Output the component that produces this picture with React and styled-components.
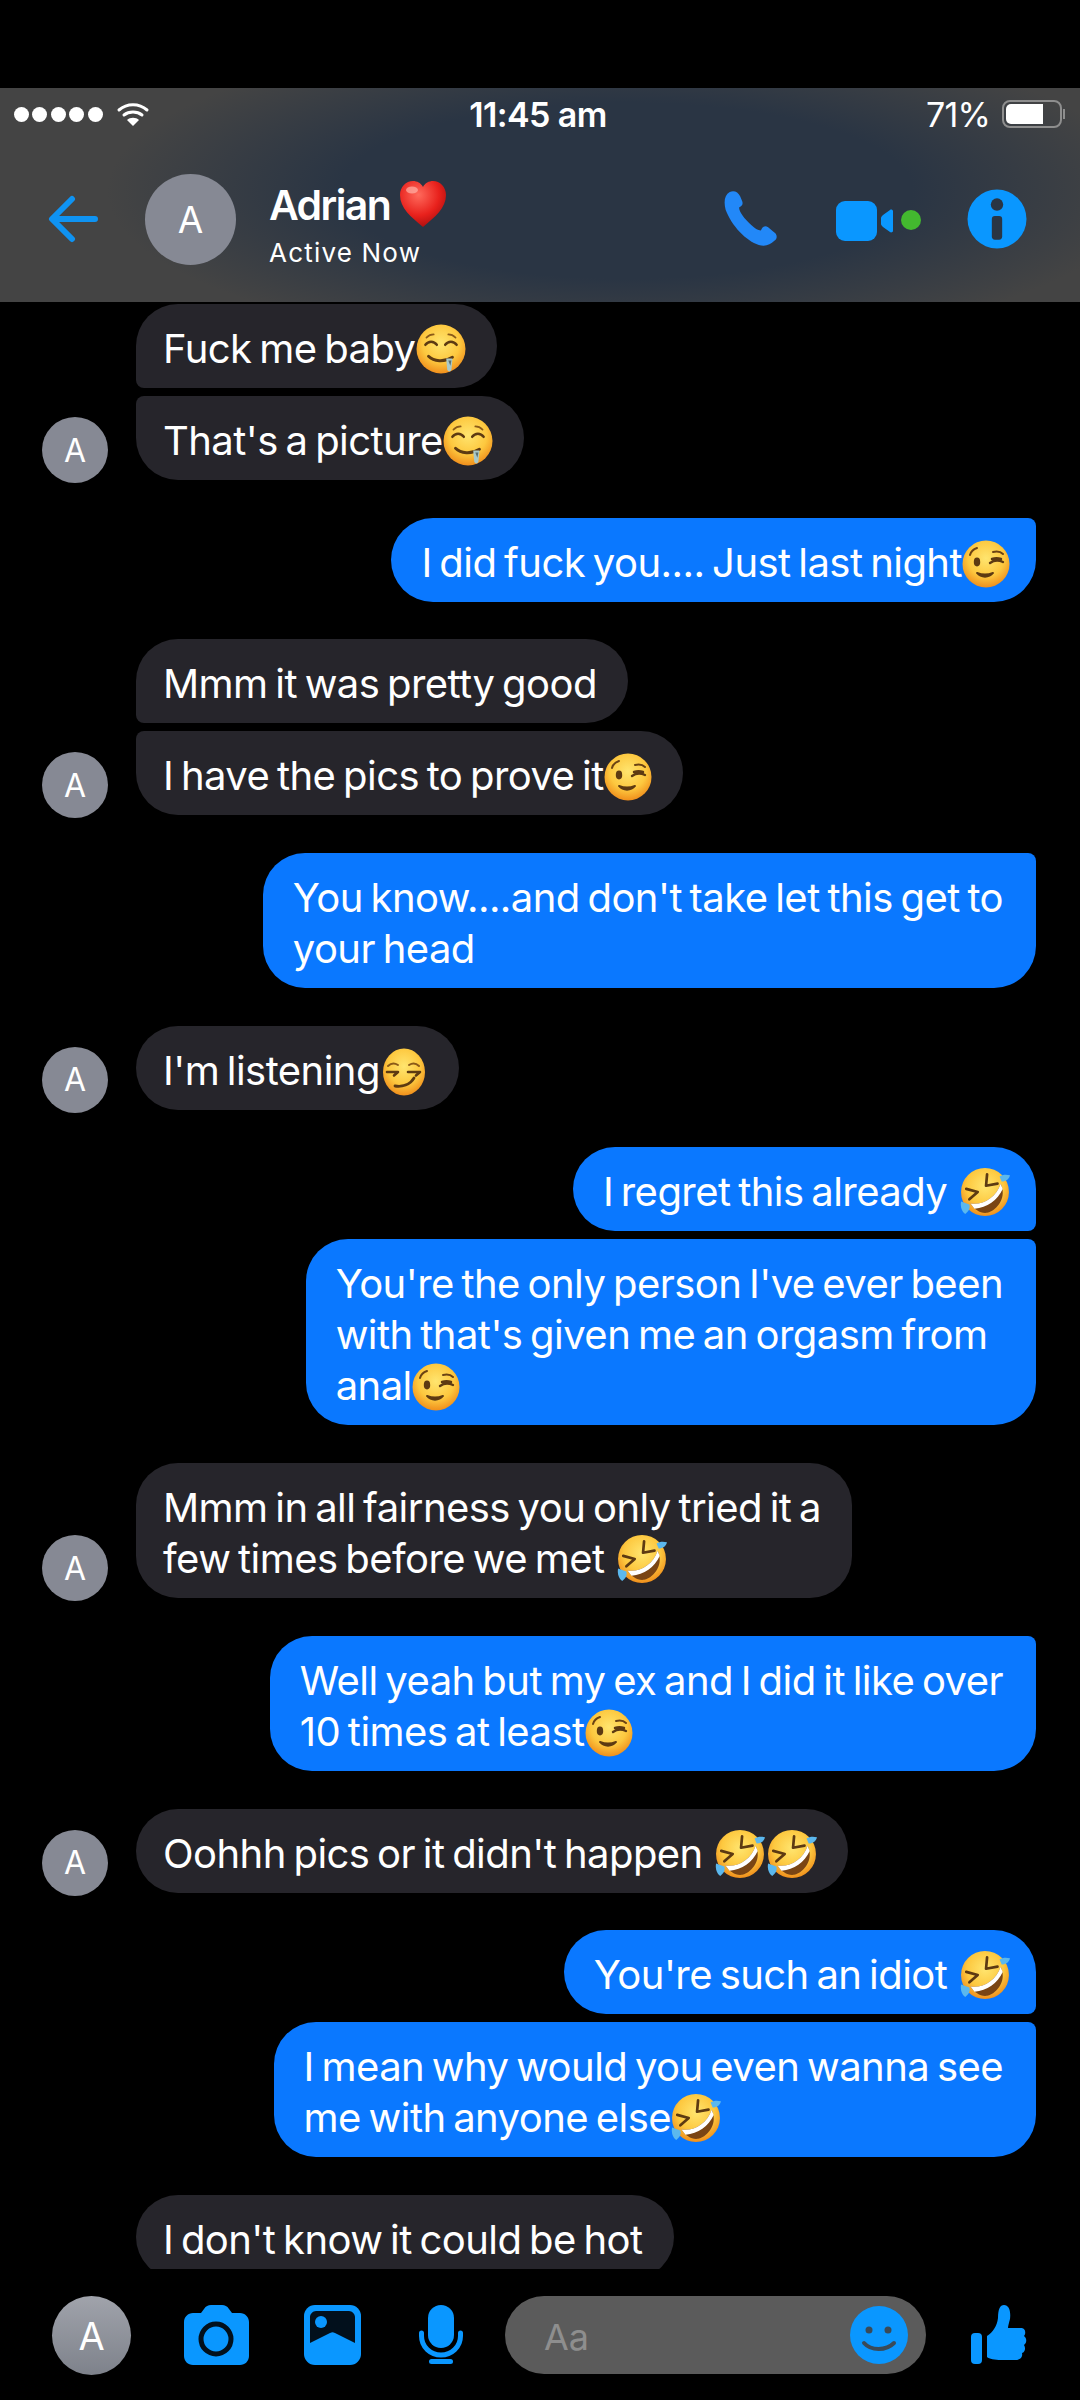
import React from 'react';
import styled, { createGlobalStyle } from 'styled-components';

const GlobalStyle = createGlobalStyle`
  html, body {
    margin: 0;
    padding: 0;
    background: #000;
  }
  * {
    box-sizing: border-box;
  }
`;

const BLUE = '#0a97ff';

const FaceDefs = ({ id }) => (
  <defs>
    <radialGradient id={id} cx="50%" cy="38%" r="62%">
      <stop offset="0%" stopColor="#ffe56f" />
      <stop offset="62%" stopColor="#fdc83f" />
      <stop offset="100%" stopColor="#f08f1c" />
    </radialGradient>
  </defs>
);

const EmojiSvg = styled.svg`
  width: ${(p) => p.$size || 48}px;
  height: ${(p) => p.$size || 48}px;
  margin-left: ${(p) => p.$nudge || 0}px;
  vertical-align: ${(p) => p.$drop || -11}px;
  display: inline-block;
`;

const Drool = () => (
  <EmojiSvg $size={50} viewBox="0 0 48 48">
    <FaceDefs id="droolFace" />
    <circle cx="24" cy="24" r="23.5" fill="url(#droolFace)" />
    <path d="M9 20c3-4 8-4 11 0M28 20c3-4 8-4 11 0" fill="none" stroke="#5d3a12" strokeWidth="2.4" strokeLinecap="round" />
    <path d="M10 13c2-2 5-3 7-3M31 10c2 0 5 1 7 3" fill="none" stroke="#8b5a18" strokeWidth="1.6" strokeLinecap="round" />
    <path d="M12 31c5 5 15 6 23 1" fill="none" stroke="#5d3a12" strokeWidth="2.8" strokeLinecap="round" />
    <path d="M29 33h6l-1 11c-1 2-3 2-4 0z" fill="#a9c9c9" />
    <path d="M31 35h3l-1 5z" fill="#5d6f70" />
  </EmojiSvg>
);

const Wink = () => (
  <EmojiSvg viewBox="0 0 48 48">
    <FaceDefs id="winkFace" />
    <circle cx="24" cy="24" r="23.5" fill="url(#winkFace)" />
    <path d="M8 15c1-4 4-6 7-7M31 12c4-1 8 0 10 2" fill="none" stroke="#6b4314" strokeWidth="2" strokeLinecap="round" />
    <ellipse cx="15" cy="22" rx="3.2" ry="4.4" fill="#5d3a12" />
    <path d="M28 23c4-3 9-3 13-1M30 19c3-1 6-1 9 0" fill="none" stroke="#5d3a12" strokeWidth="2.4" strokeLinecap="round" />
    <path d="M15 33c4 5 12 5 16 0c-5 2-11 2-16 0z" fill="#5d3a12" stroke="#5d3a12" strokeWidth="2" strokeLinejoin="round" />
  </EmojiSvg>
);

const Smirk = () => (
  <EmojiSvg viewBox="0 0 48 48">
    <FaceDefs id="smirkFace" />
    <ellipse cx="24" cy="24" rx="21" ry="23.5" fill="url(#smirkFace)" />
    <path d="M8 18c3-3 7-3 10-1M29 17c3-2 7-2 10 1" fill="none" stroke="#8b5a18" strokeWidth="2" strokeLinecap="round" />
    <path d="M7 24h11l-4 3.5M28 24h12l-4 3.5" fill="none" stroke="#5d3a12" strokeWidth="2.6" strokeLinecap="round" strokeLinejoin="round" />
    <path d="M15 38c7 1 15-1 19-8" fill="none" stroke="#5d3a12" strokeWidth="2.8" strokeLinecap="round" />
  </EmojiSvg>
);

const Rofl = ({ nudge }) => (
  <EmojiSvg $size={50} $nudge={nudge} viewBox="0 0 48 48">
    <FaceDefs id="roflFace" />
    <circle cx="24" cy="24" r="23" fill="url(#roflFace)" />
    <path d="M6 21l11 3l-8 7M26 7l-1 11l11-2" fill="none" stroke="#5d3a12" strokeWidth="2.6" strokeLinecap="round" strokeLinejoin="round" />
    <path d="M10 35c12 2 25-6 29-19c6 12-2 25-13 28c-6 1-12-3-16-9z" fill="#7a4514" />
    <path d="M10 35c12 2 25-6 29-19l2 5c-5 11-15 18-27 19z" fill="#fff" />
    <path d="M38 9c3-2 7-2 10-1c-1 4-4 6-8 6z" fill="#5bb8ee" />
    <path d="M1 33c-1 5 1 10 4 12c3-2 5-5 4-9z" fill="#5bb8ee" />
  </EmojiSvg>
);

const Heart = () => (
  <EmojiSvg $drop={-8} viewBox="0 0 48 48">
    <defs>
      <radialGradient id="heartFill" cx="40%" cy="30%" r="75%">
        <stop offset="0%" stopColor="#ff6a5c" />
        <stop offset="60%" stopColor="#e8211c" />
        <stop offset="100%" stopColor="#a80d0d" />
      </radialGradient>
    </defs>
    <path d="M24 47C12 37 1 28 1 15C1 7 7 1 14 1c4 0 8 2 10 6c2-4 6-6 10-6c7 0 13 6 13 14c0 13-11 22-23 32z" fill="url(#heartFill)" />
    <ellipse cx="13" cy="10" rx="6" ry="3.5" fill="#ffb3a8" opacity=".7" />
  </EmojiSvg>
);

const Page = styled.div`
  width: 1080px;
  height: 100vh;
  display: flex;
  flex-direction: column;
  background: #000;
  color: #fff;
  font-family: Inter, "Liberation Sans", sans-serif;
  overflow: hidden;
`;

const TopGap = styled.div`
  height: 88px;
  flex: none;
`;

const Header = styled.header`
  flex: none;
  height: 214px;
  display: flex;
  flex-direction: column;
  background:
    radial-gradient(ellipse 520px 160px at 58% 48%, #2a3544 55%, rgba(42, 53, 68, 0) 100%),
    #444444;
`;

const StatusBar = styled.div`
  height: 52px;
  padding: 0 18px 0 14px;
  display: grid;
  grid-template-columns: 1fr auto 1fr;
  align-items: center;
`;

const StatusLeft = styled.div`
  display: flex;
  align-items: center;
  gap: 13px;
`;

const Dots = styled.div`
  display: flex;
  gap: 3.4px;
`;

const Dot = styled.span`
  width: 15px;
  height: 15px;
  border-radius: 50%;
  background: #fff;
`;

const Clock = styled.div`
  font-size: 34px;
  font-weight: 600;
  letter-spacing: -0.6px;
`;

const StatusRight = styled.div`
  display: flex;
  align-items: center;
  justify-content: flex-end;
  gap: 12px;
  font-size: 34px;
  letter-spacing: -0.8px;
`;

const Battery = styled.div`
  position: relative;
  width: 60px;
  height: 28px;
  border: 2px solid #8e8e8e;
  border-radius: 8px;
  padding: 2px;
  &::after {
    content: '';
    position: absolute;
    right: -5px;
    top: 7px;
    width: 2px;
    height: 10px;
    background: #8e8e8e;
  }
`;

const BatteryFill = styled.div`
  height: 100%;
  background: #fff;
  border-radius: 5px 0 0 5px;
`;

const NavBar = styled.div`
  flex: 1;
  display: flex;
  align-items: center;
  padding: 0 0 4px 48px;
`;

const BackIcon = styled.svg`
  width: 52px;
  height: 50px;
  flex: none;
`;

const HeaderAvatar = styled.div`
  width: 91px;
  height: 91px;
  margin-left: 45px;
  flex: none;
  border-radius: 50%;
  background: #868994;
  display: flex;
  align-items: center;
  justify-content: center;
  font-size: 37px;
`;

const Contact = styled.div`
  margin-left: 33px;
  padding-top: 12px;
  flex: 1;
`;

const Name = styled.div`
  font-size: 41px;
  font-weight: 600;
  letter-spacing: -1.6px;
  line-height: 50px;
  white-space: nowrap;
`;

const Presence = styled.div`
  font-size: 26px;
  letter-spacing: 1.2px;
  line-height: 34px;
  margin-top: 6.5px;
`;

const NavActions = styled.div`
  display: flex;
  align-items: center;
  margin-right: 65px;
`;

const PhoneIcon = styled.svg`
  width: 55px;
  height: 56px;
`;

const VideoIcon = styled.svg`
  width: 88px;
  height: 40px;
  margin-left: 58px;
  margin-top: 4px;
`;

const InfoIcon = styled.svg`
  width: 60px;
  height: 60px;
  margin-left: 43px;
  margin-right: -12px;
`;

const Messages = styled.main`
  flex: 1;
  min-height: 0;
  overflow: hidden;
  padding: 2px 44px 0 42px;
  display: flex;
  flex-direction: column;
  gap: 37.7px;
`;

const InGroup = styled.section`
  display: flex;
  align-items: flex-end;
  gap: 28px;
  flex: none;
`;

const OutGroup = styled.section`
  display: flex;
  flex-direction: column;
  align-items: flex-end;
  gap: 8px;
  flex: none;
`;

const BubbleStack = styled.div`
  display: flex;
  flex-direction: column;
  align-items: flex-start;
  gap: 8px;
`;

const Avatar = styled.div`
  width: 66px;
  height: 66px;
  margin-bottom: -3px;
  flex: none;
  border-radius: 50%;
  background: #868994;
  display: flex;
  align-items: center;
  justify-content: center;
  font-size: 32px;
  visibility: ${(p) => (p.$hidden ? 'hidden' : 'visible')};
`;

const SMALL = 8;
const BIG = 42;

const Bubble = styled.div`
  padding: 19px ${(p) => (p.$out ? 33 : 31)}px 14px ${(p) => (p.$out ? 30 : 27)}px;
  font-size: 40px;
  line-height: 51px;
  letter-spacing: -0.55px;
  word-spacing: -3px;
  white-space: nowrap;
  color: #fff;
  background: ${(p) => (p.$out ? '#0a78ff' : '#26252b')};
  border-radius: ${(p) => {
    if (p.$out) {
      const topRight = p.$pos === 'first' ? BIG : SMALL;
      const bottomRight = p.$pos === 'first' ? SMALL : BIG;
      return `${BIG}px ${topRight}px ${bottomRight}px ${BIG}px`;
    }
    const topLeft = p.$pos === 'last' ? SMALL : BIG;
    const bottomLeft = p.$pos === 'first' ? SMALL : BIG;
    return `${topLeft}px ${BIG}px ${BIG}px ${bottomLeft}px`;
  }};
  ${(p) => p.$out && 'svg:last-child { margin-right: -7px; }'}
`;

const Composer = styled.footer`
  flex: none;
  height: 131px;
  display: flex;
  align-items: flex-start;
  padding: 27px 0 0 52px;
`;

const ComposerAvatar = styled.div`
  width: 79px;
  height: 79px;
  flex: none;
  border-radius: 50%;
  background: linear-gradient(#a0a3ab, #7e828b);
  display: flex;
  align-items: center;
  justify-content: center;
  font-size: 38px;
`;

const ToolIcon = styled.svg`
  flex: none;
  height: 60px;
  width: ${(p) => p.$w}px;
  margin: 9px 0 0 ${(p) => p.$gap}px;
`;

const InputPill = styled.div`
  width: 421px;
  height: 78px;
  margin-left: 42px;
  flex: none;
  border-radius: 39px;
  background: #5b5b5b;
  display: flex;
  align-items: center;
  justify-content: space-between;
  padding: 0 18px 0 39px;
`;

const Placeholder = styled.span`
  font-size: 36px;
  color: #8e8e8e;
  letter-spacing: 0;
  padding-top: 4px;
`;

const SmileIcon = styled.svg`
  width: 58px;
  height: 58px;
`;

const Wifi = () => (
  <svg width="34" height="26" viewBox="0 0 32 26">
    <path d="M2 9c8-7 20-7 28 0" fill="none" stroke="#fff" strokeWidth="3" strokeLinecap="round" />
    <path d="M7 14c5-4 13-4 18 0" fill="none" stroke="#fff" strokeWidth="3" strokeLinecap="round" />
    <path d="M16 25l-6-6c3-3 9-3 12 0z" fill="#fff" />
  </svg>
);

const App = () => (
  <Page>
    <GlobalStyle />
    <TopGap />
    <Header>
      <StatusBar>
        <StatusLeft>
          <Dots>
            <Dot /><Dot /><Dot /><Dot /><Dot />
          </Dots>
          <Wifi />
        </StatusLeft>
        <Clock>11:45 am</Clock>
        <StatusRight>
          71%
          <Battery>
            <BatteryFill style={{ width: '71%' }} />
          </Battery>
        </StatusRight>
      </StatusBar>
      <NavBar>
        <BackIcon viewBox="0 0 52 50">
          <path d="M47 25H5M24 5L4 25l20 20" fill="none" stroke="#0f93f2" strokeWidth="6" strokeLinecap="round" strokeLinejoin="round" />
        </BackIcon>
        <HeaderAvatar>A</HeaderAvatar>
        <Contact>
          <Name>Adrian <Heart /></Name>
          <Presence>Active Now</Presence>
        </Contact>
        <NavActions>
          <PhoneIcon viewBox="0 0 52 54">
            <path d="M6 1c4-2 8 0 10 4l2 5c1 3 0 4-3 6c0 4 5 11 12 17c3 3 6 5 9 5c2-4 4-5 7-3l6 5c3 2 3 6 0 8c-4 4-9 6-15 4C22 48 8 34 2 18C0 10 1 4 6 1z" fill="#2288f8" />
          </PhoneIcon>
          <VideoIcon viewBox="0 0 88 40">
            <rect x="0" y="0" width="41" height="40" rx="9" fill={BLUE} />
            <path d="M47 14l7-5c1-1 3 0 3 1v20c0 1-2 2-3 1l-7-5c-1-1-2-2-2-3v-6c0-1 1-2 2-3z" fill={BLUE} />
            <circle cx="75" cy="19" r="10" fill="#43b82f" />
          </VideoIcon>
          <InfoIcon viewBox="0 0 58 58">
            <circle cx="29" cy="29" r="28.5" fill={BLUE} />
            <circle cx="29" cy="15" r="6" fill="#2a3544" />
            <rect x="24" y="26" width="10" height="23" rx="3" fill="#2a3544" />
          </InfoIcon>
        </NavActions>
      </NavBar>
    </Header>

    <Messages>
      <InGroup>
        <Avatar>A</Avatar>
        <BubbleStack>
          <Bubble $pos="first">Fuck me baby<Drool /></Bubble>
          <Bubble $pos="last">That's a picture<Drool /></Bubble>
        </BubbleStack>
      </InGroup>

      <OutGroup>
        <Bubble $out>I did fuck you.... Just last night<Wink /></Bubble>
      </OutGroup>

      <InGroup>
        <Avatar>A</Avatar>
        <BubbleStack>
          <Bubble $pos="first">Mmm it was pretty good</Bubble>
          <Bubble $pos="last">I have the pics to prove it<Wink /></Bubble>
        </BubbleStack>
      </InGroup>

      <OutGroup>
        <Bubble $out>You know....and don't take let this get to<br />your head</Bubble>
      </OutGroup>

      <InGroup>
        <Avatar>A</Avatar>
        <BubbleStack>
          <Bubble>I'm listening<Smirk /></Bubble>
        </BubbleStack>
      </InGroup>

      <OutGroup>
        <Bubble $out $pos="first">I regret this already <Rofl nudge={5} /></Bubble>
        <Bubble $out $pos="last">You're the only person I've ever been<br />with that's given me an orgasm from<br />anal<Wink /></Bubble>
      </OutGroup>

      <InGroup>
        <Avatar>A</Avatar>
        <BubbleStack>
          <Bubble>Mmm in all fairness you only tried it a<br />few times before we met <Rofl nudge={5} /></Bubble>
        </BubbleStack>
      </InGroup>

      <OutGroup>
        <Bubble $out>Well yeah but my ex and I did it like over<br />10 times at least<Wink /></Bubble>
      </OutGroup>

      <InGroup>
        <Avatar>A</Avatar>
        <BubbleStack>
          <Bubble>Oohhh pics or it didn't happen <Rofl nudge={5} /><Rofl nudge={2} /></Bubble>
        </BubbleStack>
      </InGroup>

      <OutGroup>
        <Bubble $out $pos="first">You're such an idiot <Rofl nudge={5} /></Bubble>
        <Bubble $out $pos="last">I mean why would you even wanna see<br />me with anyone else<Rofl /></Bubble>
      </OutGroup>

      <InGroup>
        <Avatar $hidden>A</Avatar>
        <BubbleStack>
          <Bubble>I don't know it could be hot</Bubble>
        </BubbleStack>
      </InGroup>
    </Messages>

    <Composer>
      <ComposerAvatar>A</ComposerAvatar>
      <ToolIcon $w={65} $gap={53} viewBox="0 0 65 60">
        <path d="M9 8h8l3-4c2-3 4-4 7-4h11c3 0 5 1 7 4l3 4h8c5 0 9 4 9 9v34c0 5-4 9-9 9H9c-5 0-9-4-9-9V17c0-5 4-9 9-9z" fill={BLUE} />
        <circle cx="32" cy="34" r="15" fill={BLUE} stroke="#02101c" strokeWidth="5" />
      </ToolIcon>
      <ToolIcon $w={57} $gap={55} viewBox="0 0 57 60">
        <rect x="0" y="0" width="57" height="60" rx="11" fill={BLUE} />
        <path d="M6 12c0-3 3-6 6-6h33c3 0 6 3 6 6v26L31 28c-2-1-3-1-5 0L6 38z" fill="#02101c" />
        <circle cx="17" cy="17" r="6" fill={BLUE} />
      </ToolIcon>
      <ToolIcon $w={44} $gap={58} viewBox="0 0 44 60">
        <rect x="9" y="0" width="26" height="43" rx="13" fill={BLUE} />
        <path d="M2.5 28v3c0 11 9 19 19.5 19s19.5-8 19.5-19v-3" fill="none" stroke={BLUE} strokeWidth="5" strokeLinecap="round" />
        <rect x="10" y="54" width="24" height="5" rx="2.5" fill={BLUE} />
      </ToolIcon>
      <InputPill>
        <Placeholder>Aa</Placeholder>
        <SmileIcon viewBox="0 0 58 58">
          <circle cx="29" cy="29" r="29" fill={BLUE} />
          <circle cx="19" cy="24" r="3.5" fill="#3a4a58" />
          <circle cx="38" cy="24" r="3.5" fill="#3a4a58" />
          <path d="M14 37c7 8 22 8 30 0" fill="none" stroke="#3a4a58" strokeWidth="4" strokeLinecap="round" />
        </SmileIcon>
      </InputPill>
      <ToolIcon $w={56} $gap={45} viewBox="0 0 56 60">
        <rect x="0" y="28" width="11" height="31" rx="4" fill={BLUE} />
        <path d="M16 31c6-4 10-10 11-18c0-9 2-13 6-13c5 0 7 6 6 14c-1 4-2 7-2 9h13c5 0 5 6 3 8c3 2 3 7 0 9c2 3 1 7-2 8c1 4-2 7-6 7H30c-6 0-12-1-14-3z" fill={BLUE} />
      </ToolIcon>
    </Composer>
  </Page>
);

export default App;
